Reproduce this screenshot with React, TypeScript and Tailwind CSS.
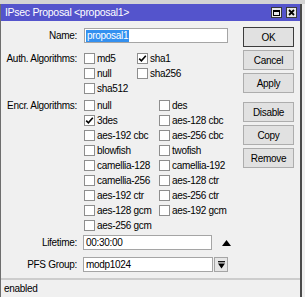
import React from 'react'

// IPsec Proposal window (Winbox style), 305x297

const auth = [
  { name: 'md5', on: false },
  { name: 'sha1', on: true },
  { name: 'null', on: false },
  { name: 'sha256', on: false },
  { name: 'sha512', on: false },
]

const encr = [
  { name: 'null', on: false },
  { name: 'des', on: false },
  { name: '3des', on: true },
  { name: 'aes-128 cbc', on: false },
  { name: 'aes-192 cbc', on: false },
  { name: 'aes-256 cbc', on: false },
  { name: 'blowfish', on: false },
  { name: 'twofish', on: false },
  { name: 'camellia-128', on: false },
  { name: 'camellia-192', on: false },
  { name: 'camellia-256', on: false },
  { name: 'aes-128 ctr', on: false },
  { name: 'aes-192 ctr', on: false },
  { name: 'aes-256 ctr', on: false },
  { name: 'aes-128 gcm', on: false },
  { name: 'aes-192 gcm', on: false },
  { name: 'aes-256 gcm', on: false },
]

function Check({ name, on }: { name: string; on: boolean }) {
  return (
    <div className="flex items-center gap-[2px] h-[15px]">
      <span className="w-[11px] h-[11px] border border-[#8e8e8e] bg-white flex items-center justify-center shrink-0">
        {on && (
          <svg width="9" height="9" viewBox="0 0 9 9">
            <path d="M1.2 4.6 L3.4 6.8 L7.8 1.8" stroke="#000" strokeWidth="1.6" fill="none" />
          </svg>
        )}
      </span>
      <span className="whitespace-nowrap">{name}</span>
    </div>
  )
}

function Label({ text }: { text: string }) {
  return <div className="w-[76px] shrink-0 text-right h-[15px] leading-[15px] whitespace-nowrap">{text}</div>
}

function Btn({ text, main }: { text: string; main?: boolean }) {
  return (
    <div
      className={
        'h-[20px] w-[51px] bg-[#e1e1e1] border flex items-center justify-center ' +
        (main ? 'border-[#3c3c3c]' : 'border-[#adadad]')
      }
    >
      {text}
    </div>
  )
}

export default function App() {
  return (
    <div className="w-[305px] h-[297px] bg-[#e6e6e6] flex flex-col overflow-hidden font-['Liberation_Sans',Arial,sans-serif] text-[10px] tracking-[-0.3px] text-black">
      <div className="h-[4px] bg-[#d4d4d4] shrink-0" />
      <div className="flex flex-1 min-h-0">
        <div className="w-[300px] flex flex-col border-l border-[#6e6e6e] bg-[#f0f0f0]">
          {/* title bar */}
          <div className="h-[17px] shrink-0 bg-[#5454cc] flex items-center pl-[4px] pr-[3px] text-white text-[10.5px]">
            <span className="flex-1 whitespace-nowrap">IPsec Proposal &lt;proposal1&gt;</span>
            <div className="flex gap-[4px]">
              <span className="w-[11px] h-[11px] bg-[#e9e9e9] border border-[#3a3a3a] flex items-center justify-center">
                <span className="w-[7px] h-[6px] border border-black border-t-2" />
              </span>
              <span className="w-[11px] h-[11px] bg-[#e9e9e9] border border-[#3a3a3a] flex items-center justify-center">
                <svg width="7" height="7" viewBox="0 0 7 7">
                  <path d="M1 1 L6 6 M6 1 L1 6" stroke="#000" strokeWidth="1.8" />
                </svg>
              </span>
            </div>
          </div>

          {/* body */}
          <div className="flex flex-1 min-h-0">
            <div className="w-[242px] shrink-0 pt-[7px] flex flex-col">
              <div className="flex gap-[7px]">
                <Label text="Name:" />
                <div className="w-[144px] h-[15px] bg-white border border-[#a5a5a5] flex items-center pl-[1px]">
                  <span className="bg-[#3390f0] text-white px-[1px] leading-[12px]">proposal1</span>
                </div>
              </div>

              <div className="flex gap-[7px] mt-[8px]">
                <Label text="Auth. Algorithms:" />
                <div className="grid grid-cols-[53px_auto]">
                  {auth.map(a => <Check key={a.name} {...a} />)}
                </div>
              </div>

              <div className="flex gap-[7px] mt-[2px]">
                <Label text="Encr. Algorithms:" />
                <div className="grid grid-cols-[75px_auto]">
                  {encr.map(a => <Check key={a.name} {...a} />)}
                </div>
              </div>

              <div className="flex items-center gap-[6px] mt-[2px]">
                <Label text="Lifetime:" />
                <div className="w-[129px] h-[15px] bg-white border border-[#a5a5a5] flex items-center pl-[2px]">00:30:00</div>
                <svg width="9" height="6" viewBox="0 0 9 6" className="ml-[4px]">
                  <path d="M0 6 L4.5 0 L9 6 Z" fill="#000" />
                </svg>
              </div>

              <div className="flex items-center gap-[6px] mt-[7px]">
                <Label text="PFS Group:" />
                <div className="flex gap-[1px]">
                  <div className="w-[130px] h-[15px] bg-white border border-[#a5a5a5] flex items-center pl-[2px]">modp1024</div>
                  <div className="w-[14px] h-[15px] bg-[#e6e6e6] border border-[#a5a5a5] flex items-center justify-center">
                    <svg width="7" height="8" viewBox="0 0 7 8">
                      <path d="M0 0.7 H7" stroke="#000" strokeWidth="1.2" />
                      <path d="M0 2.5 L7 2.5 L3.5 7.5 Z" fill="#000" />
                    </svg>
                  </div>
                </div>
              </div>
            </div>

            <div className="pt-[6px] flex flex-col gap-[3px]">
              <Btn text="OK" main />
              <Btn text="Cancel" />
              <Btn text="Apply" />
              <div className="mt-[6px] flex flex-col gap-[3px]">
                <Btn text="Disable" />
                <Btn text="Copy" />
                <Btn text="Remove" />
              </div>
            </div>
          </div>

          {/* status bar */}
          <div className="h-[19px] shrink-0 border-t-2 border-[#cdcdcd] flex items-center pl-[3px]">enabled</div>
        </div>
        <div className="w-[2px] bg-[#4a4a4a]" />
        <div className="w-[3px] bg-[#efefef]" />
      </div>
    </div>
  )
}
